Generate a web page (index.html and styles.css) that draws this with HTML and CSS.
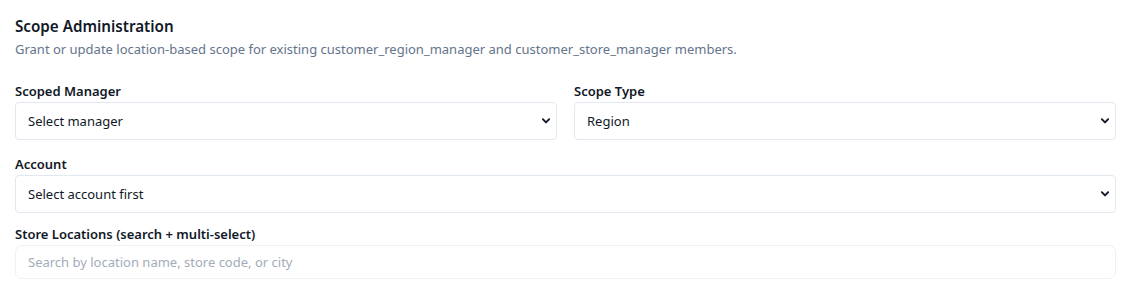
FILE: index.html
```html
<!DOCTYPE html>
<html lang="en">
<head>
  <meta charset="UTF-8" />
  <meta name="viewport" content="width=device-width, initial-scale=1.0"/>
  <title>Scope Administration</title>
  <link rel="stylesheet" href="styles.css">
</head>
<body>

  <section class="scope-panel">
    <h2 class="panel-title">Scope Administration</h2>
    <p class="panel-subtitle">Grant or update location-based scope for existing customer_region_manager and customer_store_manager members.</p>

    <div class="form-row two-col">
      <div class="field">
        <label class="field-label">Scoped Manager</label>
        <div class="select-wrap">
          <select class="field-select">
            <option>Select manager</option>
          </select>
          <svg class="chevron" viewBox="0 0 10 7"><path d="M1 1.2 L5 5.2 L9 1.2" /></svg>
        </div>
      </div>
      <div class="field">
        <label class="field-label">Scope Type</label>
        <div class="select-wrap">
          <select class="field-select">
            <option>Region</option>
          </select>
          <svg class="chevron" viewBox="0 0 10 7"><path d="M1 1.2 L5 5.2 L9 1.2" /></svg>
        </div>
      </div>
    </div>

    <div class="form-row">
      <div class="field">
        <label class="field-label">Account</label>
        <div class="select-wrap">
          <select class="field-select">
            <option>Select account first</option>
          </select>
          <svg class="chevron" viewBox="0 0 10 7"><path d="M1 1.2 L5 5.2 L9 1.2" /></svg>
        </div>
      </div>
    </div>

    <div class="form-row search-row">
      <div class="field">
        <label class="field-label">Store Locations (search + multi-select)</label>
        <input class="field-search" type="text" placeholder="Search by location name, store code, or city">
      </div>
    </div>
  </section>

</body>
</html>
```

FILE: styles.css
```css
* {
  margin: 0;
  padding: 0;
  box-sizing: border-box;
}

html, body {
  background: #ffffff;
  font-family: 'Segoe UI', 'Noto Sans', 'Open Sans', sans-serif;
  color: #0f172a;
}

.scope-panel {
  padding: 14px 14px 0 15px;
}

.panel-title {
  font-size: 15.2px;
  font-weight: 600;
  line-height: 24px;
  color: #111827;
}

.panel-subtitle {
  margin-top: 1px;
  font-size: 13px;
  line-height: 20px;
  color: #64748b;
}

/* Form rows */
.form-row {
  margin-top: 14px;
}

.panel-subtitle + .form-row {
  margin-top: 22px;
}

.form-row.search-row {
  margin-top: 11px;
}

.two-col {
  display: grid;
  grid-template-columns: 1fr 1fr;
  column-gap: 17px;
}

.field {
  display: flex;
  flex-direction: column;
  gap: 1px;
}

.field-label {
  font-size: 13px;
  font-weight: 600;
  line-height: 20px;
  color: #111827;
}

.select-wrap {
  position: relative;
}

.field-select {
  appearance: none;
  -webkit-appearance: none;
  width: 100%;
  height: 38px;
  padding: 0 28px 0 12px;
  border: 1px solid #e2e8f0;
  border-radius: 4px;
  background: #ffffff;
  font-family: inherit;
  font-size: 13px;
  color: #111827;
}

.chevron {
  position: absolute;
  right: 7px;
  top: 16px;
  width: 8px;
  height: 6px;
  fill: none;
  stroke: #111827;
  stroke-width: 2.4;
  stroke-linecap: round;
  stroke-linejoin: round;
  pointer-events: none;
}

.field-search {
  width: 100%;
  height: 34px;
  padding: 0 12px;
  border: 1px solid #eef1f5;
  border-radius: 7px;
  background: #ffffff;
  font-family: inherit;
  font-size: 13px;
  color: #111827;
  outline: none;
}

.field-search::placeholder {
  color: #a3acb9;
}
```
